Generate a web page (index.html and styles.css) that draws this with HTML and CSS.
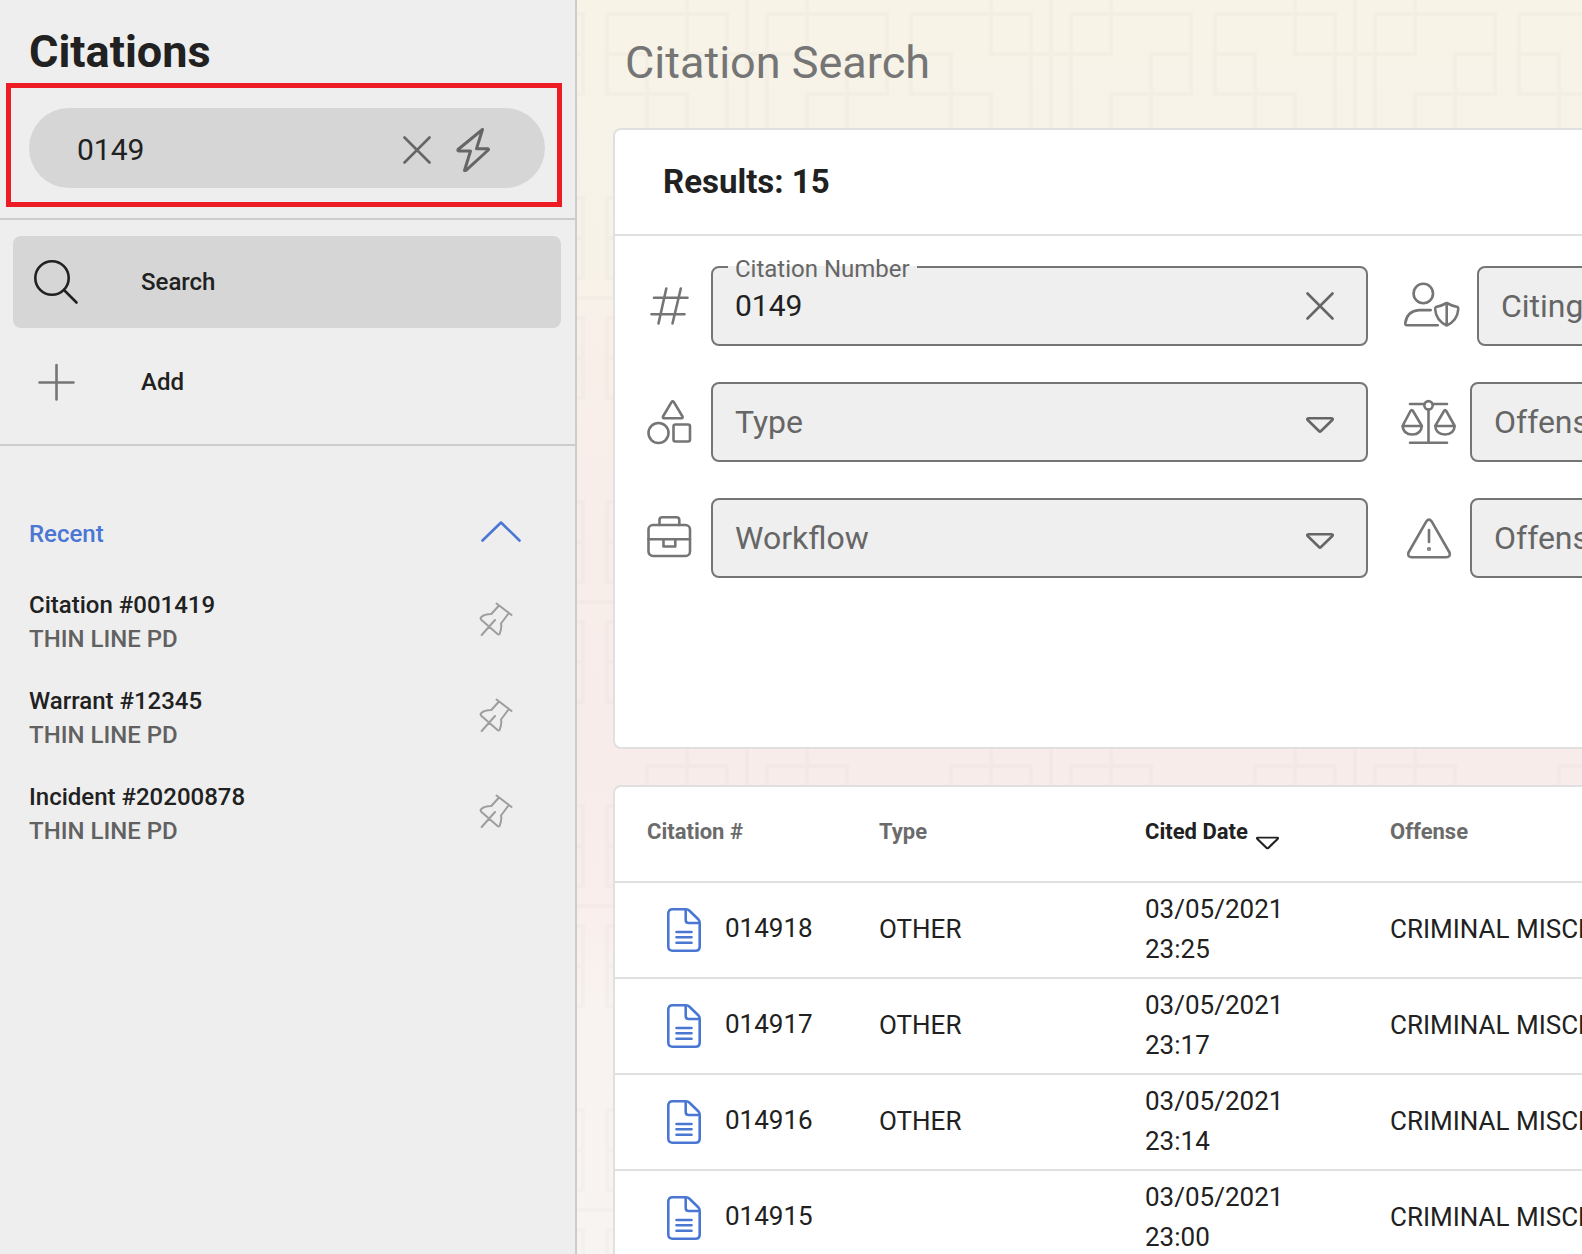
FILE: index.html
```html
<!DOCTYPE html>
<html lang="en">
<head>
<meta charset="utf-8">
<meta name="viewport" content="width=device-width, initial-scale=1">
<title>Citation Search</title>
<link rel="stylesheet" href="styles.css">
</head>
<body>
<svg class="sprite" aria-hidden="true">
  <symbol id="i-close" viewBox="0 0 28 28"><path d="M1.500 1.500 26.500 26.500M26.500 1.500 1.500 26.500"/></symbol>
  <symbol id="i-caret" viewBox="0 0 28 16"><path d="M2.500 1.300H25.500Q27.500 1.500 26.300 3L15 14Q14 15 13 14L1.700 3Q.5 1.500 2.500 1.300Z"/></symbol>
  <symbol id="i-pin" viewBox="0 0 34 34"><path d="M17.500 1.500 32.500 13M20 3.500 12.300 12Q5 12 2 15.300Q1 16.500 2.500 18L18.500 32Q20 33.200 20.700 31.500Q23 26 22 21.500L29.500 11.500M16 18 2.700 33"/></symbol>
  <symbol id="i-doc" viewBox="0 0 34 44"><path d="M5.500 1.300H19Q21 1.300 22.500 2.700L31.500 11.500Q32.700 13 32.700 15V38.500Q32.700 42.700 28.500 42.700H5.500Q1.300 42.700 1.300 38.500V5.500Q1.300 1.300 5.500 1.300ZM18.700 1.500V12Q18.700 15 21.700 15H32.500M9.500 24H24.500M9.500 29.300H24.500M9.500 34.700H24.500"/></symbol>
</svg>

<aside class="sidebar">
  <h1 class="sidebar-title">Citations</h1>
  <div class="quick-frame">
    <form class="quick-search">
      <input class="quick-input" type="text" value="0149" aria-label="Quick search">
      <button class="icon-btn" type="button" aria-label="Clear"><svg class="icon" width="28" height="28"><use href="#i-close"/></svg></button>
      <button class="icon-btn" type="button" aria-label="Quick actions"><svg class="icon icon-bold" width="34" height="44" viewBox="0 0 34 44"><path d="M26.500 1.500 2 21.500Q1.500 23 3 23H14.500L8.500 42.500L10 42.300 32.300 22Q33 20.800 31.500 20.800H20.500Z"/></svg></button>
    </form>
  </div>
  <nav class="nav">
    <a class="nav-link active" href="#search">
      <svg class="icon" width="44" height="44" viewBox="0 0 44 44"><circle cx="18" cy="18" r="16.700"/><path d="M30 30 42.500 42.500"/></svg>
      <span>Search</span>
    </a>
    <a class="nav-link" href="#add">
      <svg class="icon" width="44" height="44" viewBox="0 0 44 44"><path d="M22.500 5V39.500M5.500 22.500H39.500"/></svg>
      <span>Add</span>
    </a>
  </nav>
  <section class="recent">
    <button class="recent-toggle" type="button" aria-expanded="true">
      <span>Recent</span>
      <svg class="icon" width="40" height="22" viewBox="0 0 40 22"><path d="M1.500 20.500 20 2.500 38.500 20.500"/></svg>
    </button>
    <ul class="recent-list">
      <li class="recent-item"><a class="recent-link" href="#001419"><span class="recent-name">Citation #001419</span><span class="recent-org">THIN LINE PD</span></a><button class="icon-btn pin" type="button" aria-label="Pin"><svg class="icon" width="34" height="34"><use href="#i-pin"/></svg></button></li>
      <li class="recent-item"><a class="recent-link" href="#12345"><span class="recent-name">Warrant #12345</span><span class="recent-org">THIN LINE PD</span></a><button class="icon-btn pin" type="button" aria-label="Pin"><svg class="icon" width="34" height="34"><use href="#i-pin"/></svg></button></li>
      <li class="recent-item"><a class="recent-link" href="#20200878"><span class="recent-name">Incident #20200878</span><span class="recent-org">THIN LINE PD</span></a><button class="icon-btn pin" type="button" aria-label="Pin"><svg class="icon" width="34" height="34"><use href="#i-pin"/></svg></button></li>
    </ul>
  </section>
</aside>

<main class="main">
  <svg class="backdrop" aria-hidden="true">
    <defs>
      <g id="quarter"><path d="M20 140V20H140V100H60V152M140 20V100M20 140H100V60H140M60 0V60H0M0 0V152M0 0H152"/></g>
      <pattern id="lattice" width="304" height="304" patternUnits="userSpaceOnUse" patternTransform="translate(18 -158)">
        <g transform="translate(152 152)">
          <use href="#quarter"/><use href="#quarter" transform="scale(-1 1)"/>
          <use href="#quarter" transform="scale(1 -1)"/><use href="#quarter" transform="scale(-1 -1)"/>
        </g>
      </pattern>
    </defs>
    <rect width="100%" height="100%" fill="url(#lattice)" stroke="none"/>
  </svg>
  <div class="content">
    <h2 class="page-title">Citation Search</h2>

    <section class="card filters">
      <h3 class="results">Results: 15</h3>
      <form class="form">
        <div class="col">
          <div class="field">
            <svg class="icon" width="44" height="44" viewBox="0 0 44 44"><path d="M7 13.700H40.500M4.500 30.300H37.500M19.300 4.500 11.500 39.500M33.800 4.500 25.500 39.500"/></svg>
            <div class="control filled">
              <label for="number">Citation Number</label>
              <input id="number" type="text" value="0149">
              <button class="icon-btn" type="button" aria-label="Clear citation number"><svg class="icon" width="28" height="28"><use href="#i-close"/></svg></button>
            </div>
          </div>
          <div class="field">
            <svg class="icon" width="44" height="44" viewBox="0 0 44 44"><path d="M24.500 2.200Q25.700.5 26.900 2.200L35.500 16.500Q36 18.200 34.500 18.200H17Q15.500 18.200 16 16.500Z"/><circle cx="11.500" cy="33" r="10"/><rect x="26.500" y="24.500" width="16.500" height="17" rx="2"/></svg>
            <div class="control">
              <label for="type">Type</label>
              <select id="type"><option></option></select>
              <svg class="icon caret" width="28" height="16"><use href="#i-caret"/></svg>
            </div>
          </div>
          <div class="field">
            <svg class="icon" width="44" height="44" viewBox="0 0 44 44"><rect x="1.500" y="9" width="41.500" height="31" rx="4.500"/><path d="M12.500 9V4Q12.500 1.300 15.300 1.300H29.500Q32.300 1.300 32.300 4V9M1.500 23.300H43M16.500 23.300V30.500H28.300V23.300"/></svg>
            <div class="control">
              <label for="workflow">Workflow</label>
              <select id="workflow"><option></option></select>
              <svg class="icon caret" width="28" height="16"><use href="#i-caret"/></svg>
            </div>
          </div>
        </div>
        <div class="col col-wide">
          <div class="field">
            <span class="badge-icon"><svg class="icon" width="56" height="44" viewBox="0 1.500 56 44"><circle cx="19.300" cy="11" r="9.700"/><path d="M26.700 27.600H15Q3 28.500 1.300 40.500Q1 42.800 3 42.800H33.700M42.700 20.500Q48 23.500 53.500 24.500Q54.500 25 54.200 27Q53.500 38 42.700 43Q32 38 31.200 27Q31 25 32 24.500Q37.500 23.500 42.700 20.500ZM42.700 20.500V43"/></svg></span>
            <div class="control">
              <label for="officer">Citing Officer</label>
              <input id="officer" type="text">
            </div>
          </div>
          <div class="field">
            <svg class="icon" width="56" height="44" viewBox="-1 0 56 44"><circle cx="27.500" cy="5.300" r="4.200"/><path d="M9 4H23.300M31.700 4H46M27.500 9.500V42.700M9 42.700H46M1.500 26 9.500 11Q10.700 9 12 11L20.900 26ZM1.500 26Q2.500 34.500 11.200 34.500Q20 34.500 20.900 26M34.200 26 43 11Q44 9 45.300 11L53.700 26ZM34.200 26Q35 34.500 44 34.500Q53 34.500 53.700 26"/></svg>
            <div class="control">
              <label for="offense">Offense</label>
              <input id="offense" type="text">
            </div>
          </div>
          <div class="field">
            <svg class="icon" width="56" height="44" viewBox="-7 0 56 44"><path d="M19.500 5.200Q22 2 24.500 5.200L42.500 36.500Q44 40.800 39.500 41.200H4.500Q0 40.800 1.500 36.500ZM22 14V26"/><circle cx="22" cy="33" r=".8"/></svg>
            <div class="control">
              <label for="severity">Offense Level</label>
              <input id="severity" type="text">
            </div>
          </div>
        </div>
      </form>
    </section>

    <section class="card">
      <table class="results-table">
        <colgroup><col class="c-number"><col class="c-type"><col class="c-date"><col></colgroup>
        <thead>
          <tr><th>Citation #</th><th>Type</th><th class="sorted" aria-sort="descending"><span class="sort">Cited Date<svg class="icon sort-icon" width="23" height="14" viewBox="0 0 28 16"><use href="#i-caret"/></svg></span></th><th>Offense</th></tr>
        </thead>
        <tbody>
          <tr><td><a class="record" href="#014918"><svg class="icon" width="34" height="44"><use href="#i-doc"/></svg><span>014918</span></a></td><td>OTHER</td><td>03/05/2021<br>23:25</td><td>CRIMINAL MISCHIEF</td></tr>
          <tr><td><a class="record" href="#014917"><svg class="icon" width="34" height="44"><use href="#i-doc"/></svg><span>014917</span></a></td><td>OTHER</td><td>03/05/2021<br>23:17</td><td>CRIMINAL MISCHIEF</td></tr>
          <tr><td><a class="record" href="#014916"><svg class="icon" width="34" height="44"><use href="#i-doc"/></svg><span>014916</span></a></td><td>OTHER</td><td>03/05/2021<br>23:14</td><td>CRIMINAL MISCHIEF</td></tr>
          <tr><td><a class="record" href="#014915"><svg class="icon" width="34" height="44"><use href="#i-doc"/></svg><span>014915</span></a></td><td></td><td>03/05/2021<br>23:00</td><td>CRIMINAL MISCHIEF</td></tr>
        </tbody>
      </table>
    </section>
  </div>
</main>
</body>
</html>
```
FILE: styles.css
```css
* { box-sizing: border-box; }

body {
  margin: 0;
  display: flex;
  height: 100vh;
  overflow: hidden;
  font-family: Roboto, "Liberation Sans", sans-serif;
  color: #212121;
}

h1, h2, h3, ul { margin: 0; padding: 0; }
ul { list-style: none; }
a { color: inherit; text-decoration: none; }
input, select, button { font: inherit; color: inherit; border: 0; padding: 0; margin: 0; background: none; }
input:focus, select:focus { outline: none; }

.sprite { position: absolute; width: 0; height: 0; }

.icon {
  display: block;
  flex: none;
  overflow: visible;
  fill: none;
  stroke: currentColor;
  stroke-width: 2.6px;
  stroke-linecap: round;
  stroke-linejoin: round;
}
.icon-bold { stroke-width: 3px; }
.icon-btn { display: block; flex: none; color: #666; cursor: pointer; }

/* Sidebar */
.sidebar {
  flex: 0 0 577px;
  background: #eee;
  border-right: 2px solid #ccc;
  overflow: hidden;
}
.sidebar-title {
  padding: 22px 29px 1px;
  font-size: 45px;
  line-height: 60px;
  font-weight: 700;
}
.quick-frame {
  margin: 0 13px 11px 6px;
  padding: 20px 12px 14px 18px;
  border: 5px solid #ed1c24;
}
.quick-search {
  display: flex;
  align-items: center;
  gap: 25px;
  height: 80px;
  padding: 2px 55px 0 48px;
  border-radius: 40px;
  background: #d6d6d6;
}
.quick-search .icon-btn { padding-top: 2px; }
.quick-input { flex: 1; min-width: 0; font-size: 30px; }

.nav {
  display: flex;
  flex-direction: column;
  gap: 8px;
  padding: 16px 14px 16px 13px;
  border-top: 2px solid #ccc;
  border-bottom: 2px solid #ccc;
}
.nav-link {
  display: flex;
  align-items: center;
  gap: 63px;
  height: 92px;
  padding: 0 21px;
  border-radius: 8px;
  font-size: 24px;
  font-weight: 500;
}
.nav-link .icon { color: #757575; }
.nav-link.active { background: #d6d6d6; }
.nav-link.active .icon { color: #212121; }

.recent { padding: 70px 54px 0 29px; }
.recent-toggle {
  display: flex;
  align-items: center;
  justify-content: space-between;
  width: 100%;
  height: 36px;
  font-size: 24px;
  font-weight: 500;
  color: #4a76d4;
}
.recent-toggle .icon { margin-bottom: 6px; }
.recent-list { padding-top: 36px; }
.recent-item {
  display: flex;
  align-items: center;
  justify-content: space-between;
  height: 68px;
  margin-bottom: 28px;
  padding-right: 8px;
}
.recent-link { display: flex; flex-direction: column; font-size: 24px; line-height: 34px; font-weight: 500; }
.recent-org { color: #616161; }
.pin { padding-bottom: 6px; color: #9e9e9e; }
.pin .icon { stroke-width: 2px; }

/* Main panel */
.main {
  position: relative;
  flex: 1;
  min-width: 0;
  overflow: hidden;
  background: linear-gradient(#f7f3e7 0, #f7f2e8 22%, #f9efe9 28%, #f7ece9 60%, #f9eeec 72%, #f8f3f0 80%, #f8f4f2 100%);
}
.backdrop {
  position: absolute;
  inset: 0;
  width: 100%;
  height: 100%;
  fill: none;
  stroke: #000;
  stroke-width: 4px;
  opacity: .01;
}
.content { position: relative; min-width: 1614px; padding: 0 36px; }
.page-title {
  padding: 33px 12px 35px;
  font-size: 45px;
  line-height: 60px;
  font-weight: 400;
  color: #757575;
}
.card {
  margin-bottom: 36px;
  border: 2px solid #e0e0e0;
  border-radius: 8px;
  background: #fff;
  overflow: hidden;
}
.results {
  padding: 0 48px;
  border-bottom: 2px solid #e0e0e0;
  font-size: 33px;
  line-height: 104px;
  font-weight: 700;
}

.form { display: grid; grid-template-columns: 1fr 1fr; gap: 32px; padding: 30px 32px 169px; }
.col { display: flex; flex-direction: column; gap: 36px; }
.field { display: flex; align-items: center; gap: 20px; color: #757575; }
.col-wide .field { gap: 14px; }
.badge-icon { padding: 0 3px 0 4px; }
.control {
  position: relative;
  display: grid;
  align-items: center;
  flex: 1;
  height: 80px;
  border: 2px solid #757575;
  border-radius: 8px;
  background: #efefef;
  font-size: 32px;
}
.control > * { grid-area: 1 / 1; }
.control label { padding-left: 22px; color: #666; pointer-events: none; }
.control input, .control select { width: 100%; height: 76px; padding: 0 80px 0 22px; appearance: none; }
.control input { padding-bottom: 1px; font-size: 30px; color: #212121; }
.control .icon-btn, .caret { justify-self: end; margin-right: 32px; pointer-events: none; }
.caret { margin-top: 5px; color: #666; }
.filled label {
  position: absolute;
  top: -17px;
  left: 15px;
  padding: 0 7px;
  font-size: 24px;
  line-height: 36px;
  background: linear-gradient(#fff 15px, #efefef 15px);
}

/* Results table */
.results-table { width: 100%; table-layout: fixed; border-collapse: collapse; }
.c-number { width: 264px; }
.c-type { width: 266px; }
.c-date { width: 245px; }
.results-table tr { height: 96px; border-bottom: 2px solid #e0e0e0; }
.results-table thead tr { height: 95px; }
.results-table th { padding: 0 0 5px; text-align: left; font-size: 22px; font-weight: 700; color: #6b6b6b; }
.results-table th.sorted { color: #212121; }
.results-table td { padding: 0 0 3px; font-size: 26px; line-height: 40px; }
.results-table th:first-child { padding-left: 32px; }
.results-table td:first-child { padding: 0 0 0 52px; }
.record { display: flex; align-items: center; gap: 24px; }
.record span { padding-bottom: 5px; }
.record .icon { color: #4a76d4; }
.sort { display: flex; align-items: center; gap: 8px; }
.sort-icon { margin-top: 22px; }
```
